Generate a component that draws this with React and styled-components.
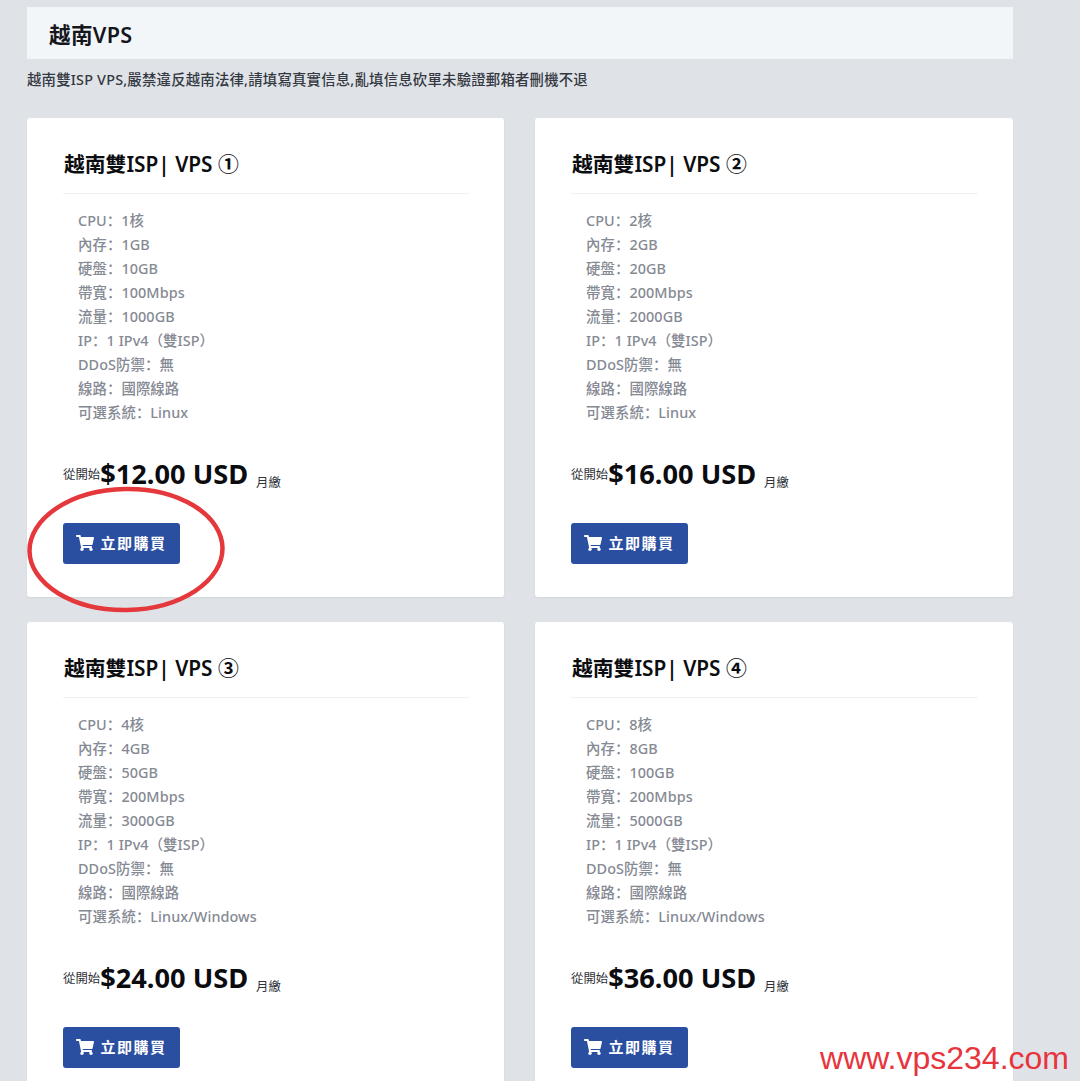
import React from 'react'
import styled, { createGlobalStyle } from 'styled-components'
import { FaShoppingCart } from 'react-icons/fa'

const FONT = `"Noto Sans", "Noto Sans CJK SC", sans-serif`

const GlobalStyle = createGlobalStyle`
  html, body {
    margin: 0;
    padding: 0;
    height: 1081px;
    overflow: hidden;
    background: #dfe3e8;
    font-family: ${FONT};
  }
`

const plans = [
  { no: '①', cpu: '1核', ram: '1GB', disk: '10GB', band: '100Mbps', traffic: '1000GB', os: 'Linux', price: '$12.00', circled: true },
  { no: '②', cpu: '2核', ram: '2GB', disk: '20GB', band: '200Mbps', traffic: '2000GB', os: 'Linux', price: '$16.00' },
  { no: '③', cpu: '4核', ram: '4GB', disk: '50GB', band: '200Mbps', traffic: '3000GB', os: 'Linux/Windows', price: '$24.00' },
  { no: '④', cpu: '8核', ram: '8GB', disk: '100GB', band: '200Mbps', traffic: '5000GB', os: 'Linux/Windows', price: '$36.00' },
]

const App = () => (
  <Page>
    <GlobalStyle />
    <Header>越南VPS</Header>
    <Notice>越南雙ISP VPS,嚴禁違反越南法律,請填寫真實信息,亂填信息砍單未驗證郵箱者刪機不退</Notice>
    <Grid>
      {plans.map((plan) => (
        <Card key={plan.no}>
          <CardTitle>越南雙ISP| VPS {plan.no}</CardTitle>
          <Specs>
            <Spec>CPU：{plan.cpu}</Spec>
            <Spec>內存：{plan.ram}</Spec>
            <Spec>硬盤：{plan.disk}</Spec>
            <Spec>帶寬：{plan.band}</Spec>
            <Spec>流量：{plan.traffic}</Spec>
            <Spec>IP：1 IPv4（雙ISP）</Spec>
            <Spec>DDoS防禦：無</Spec>
            <Spec>線路：國際線路</Spec>
            <Spec>可選系統：{plan.os}</Spec>
          </Specs>
          <PriceRow>
            <PriceFrom>從開始</PriceFrom>
            <Price>{plan.price} USD</Price>
            <Cycle>月繳</Cycle>
          </PriceRow>
          <BuyButton>
            <FaShoppingCart size={18} />
            <span>立即購買</span>
          </BuyButton>
          {plan.circled && (
            <Circle viewBox="0 0 198 128" width="198" height="128">
              <ellipse cx="99" cy="63.5" rx="96.5" ry="60.5" fill="none" stroke="#e4383c" strokeWidth="4.5" transform="rotate(-1 99 63.5)" />
            </Circle>
          )}
        </Card>
      ))}
    </Grid>
    <Watermark>www.vps234.com</Watermark>
  </Page>
)

const Page = styled.div`
  position: relative;
  box-sizing: border-box;
  width: 1080px;
  height: 1081px;
  padding: 7px 67px 0 27px;
  overflow: hidden;
`

const Header = styled.div`
  height: 52px;
  padding-left: 22px;
  display: flex;
  align-items: center;
  background: #f3f6f9;
  color: #15171c;
  font-size: 21.6px;
  font-weight: 600;
  letter-spacing: 0.3px;
`

const Notice = styled.p`
  margin: 11px 0 0;
  height: 20px;
  line-height: 20px;
  color: #343841;
  font-size: 14.4px;
  font-weight: 500;
  letter-spacing: 0.2px;
  white-space: nowrap;
`

const Grid = styled.div`
  display: grid;
  grid-template-columns: 477px 478px;
  column-gap: 31px;
  row-gap: 25px;
  margin-top: 28px;
`

const Card = styled.section`
  position: relative;
  box-sizing: border-box;
  height: 479px;
  padding: 1px 35px 0 36px;
  background: #fff;
  border-radius: 3px;
  box-shadow: 0 1px 2px rgba(60, 70, 90, 0.08);
`

const CardTitle = styled.h3`
  box-sizing: border-box;
  height: 75px;
  margin: 0;
  padding: 30px 0 0 1px;
  border-bottom: 1px solid #eef0f3;
  line-height: 30px;
  color: #0c0d10;
  font-size: 20.8px;
  font-weight: 600;
`

const Specs = styled.ul`
  list-style: none;
  margin: 15px 0 0;
  padding: 0 0 0 15px;
`

const Spec = styled.li`
  height: 24px;
  line-height: 24px;
  color: #858993;
  font-size: 14.4px;
  font-weight: 500;
  letter-spacing: 0.08px;
`

const PriceRow = styled.div`
  display: flex;
  align-items: baseline;
  margin-top: 28px;
  height: 42px;
  line-height: 42px;
`

const PriceFrom = styled.span`
  position: relative;
  top: -5px;
  color: #2f3238;
  font-size: 12.4px;
`

const Price = styled.span`
  color: #0b0c10;
  font-size: 27.2px;
  font-weight: 700;
`

const Cycle = styled.span`
  position: relative;
  top: 3px;
  margin-left: 8px;
  color: #2f3238;
  font-size: 12.4px;
`

const BuyButton = styled.button`
  display: flex;
  align-items: center;
  justify-content: center;
  gap: 6px;
  width: 117px;
  height: 41px;
  margin-top: 28px;
  padding: 0 0 2px;
  border: 0;
  border-radius: 3px;
  background: #2a4ea0;
  color: #fff;
  font-family: ${FONT};
  font-size: 15px;
  font-weight: 700;
  letter-spacing: 1.5px;
`

const Circle = styled.svg`
  position: absolute;
  left: 0;
  top: 368px;
  pointer-events: none;
`

const Watermark = styled.div`
  position: absolute;
  right: 11px;
  bottom: 4px;
  color: #e8343c;
  font-family: "Liberation Sans", Arial, sans-serif;
  font-size: 32px;
  line-height: 37px;
`

export default App
